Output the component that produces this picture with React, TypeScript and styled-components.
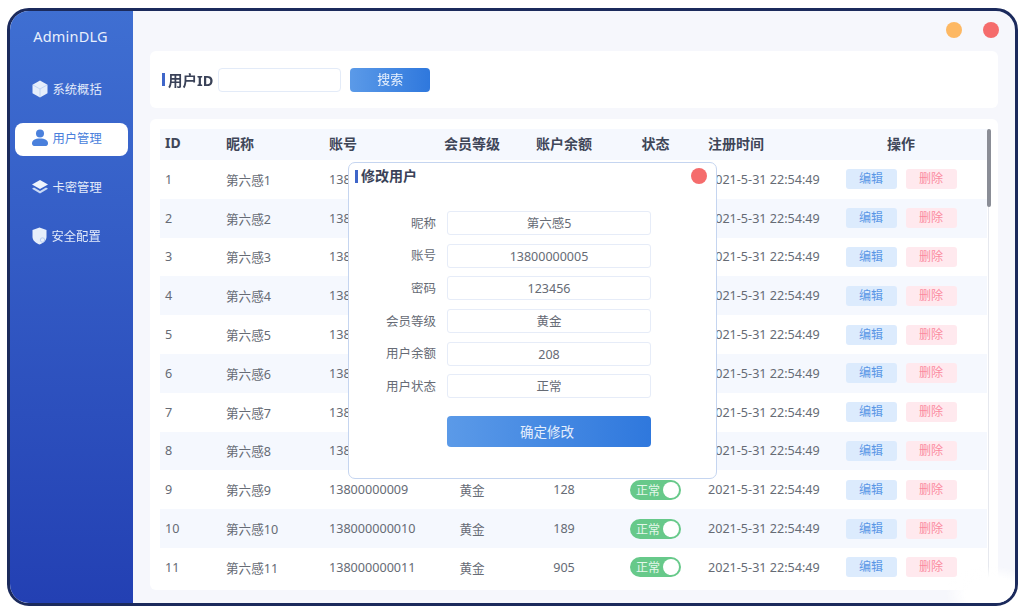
import React from "react";
import styled, { createGlobalStyle } from "styled-components";

const Global = createGlobalStyle`
  html, body { margin: 0; padding: 0; background: #fff; }
  body { font-family: "Noto Sans", "Noto Sans CJK SC", sans-serif; width: 1024px; height: 614px; overflow: hidden; }
  * { box-sizing: border-box; }
`;
const Stage = styled.div`
  padding: 8px 6px 8px 7px;
  height: 614px;
  filter: blur(0.55px);
`;
const Frame = styled.div`
  position: relative;
  height: 598px;
  border: 3px solid #1b2a5c;
  border-radius: 22px;
  overflow: hidden;
  display: flex;
  background: #f6f7fc;
`;
const Side = styled.aside`
  width: 123px;
  flex: none;
  background: linear-gradient(180deg, #3f6fd2 0%, #2340b3 100%);
  display: flex;
  flex-direction: column;
  align-items: center;
  padding-top: 13px;
`;
const Logo = styled.div`
  color: #e8effc;
  font-size: 14.5px;
  line-height: 24px;
  letter-spacing: 0.2px;
  margin-bottom: 26px;
  margin-left: -2px;
`;
const Nav = styled.nav`
  display: flex;
  flex-direction: column;
  gap: 16px;
  width: 113px;
  margin-left: -1px;
`;
const NavItem = styled.div<{ $active?: boolean }>`
  height: 33px;
  border-radius: 8px;
  display: flex;
  align-items: center;
  gap: 5px;
  padding: 0 0 3px 17px;
  font-size: 12.3px;
  background: ${(p) => (p.$active ? "#fff" : "transparent")};
  color: ${(p) => (p.$active ? "#4a7fdc" : "#e3ebfa")};
`;
const Main = styled.main`
  flex: 1;
  min-width: 0;
  display: flex;
  flex-direction: column;
  padding-left: 17px;
  padding-right: 17px;
`;
const TopBar = styled.div`
  height: 40px;
  flex: none;
  display: flex;
  justify-content: flex-end;
  align-items: flex-start;
  gap: 21px;
  padding: 11px 0 0;
  margin-right: -1px;
`;
const Dot = styled.span<{ $color: string }>`
  width: 16px;
  height: 16px;
  border-radius: 50%;
  background: ${(p) => p.$color};
  flex: none;
`;
const SearchCard = styled.section`
  height: 57px;
  flex: none;
  background: #fff;
  border-radius: 6px;
  display: flex;
  align-items: center;
  padding: 0 12px;
  margin-bottom: 11px;
`;
const Heading = styled.div`
  display: flex;
  align-items: center;
  gap: 3px;
  font-weight: 700;
  color: #3a4258;
  font-size: 14px;
  line-height: 16px;
  &::before {
    content: "";
    width: 3px;
    height: 13px;
    background: #3f66c9;
  }
`;
const SearchHeading = styled(Heading)`
  font-size: 14.5px;
`;
const SearchInput = styled.div`
  width: 123px;
  height: 24px;
  margin-left: 5px;
  border: 1px solid #e3ebf8;
  border-radius: 4px;
  background: #fff;
`;
const SearchButton = styled.button`
  width: 80px;
  height: 24px;
  margin-left: 9px;
  border: 0;
  border-radius: 4px;
  background: linear-gradient(90deg, #5b9ae8, #2f78dd);
  color: #e8f1fd;
  font: inherit;
  font-size: 13px;
  padding: 0 0 2px;
`;
const TableCard = styled.section`
  height: 471px;
  flex: none;
  background: #fff;
  border-radius: 6px;
  display: flex;
  padding: 10px 7px 0 10px;
  overflow: hidden;
`;
const Table = styled.div`
  flex: 1;
  min-width: 0;
`;
const Scroll = styled.div`
  width: 4px;
  flex: none;
  position: relative;
  height: 100%;
  background: linear-gradient(90deg, transparent 1px, #e6e8ee 1px, #e6e8ee 2px, transparent 2px);
  &::before {
    content: "";
    position: absolute;
    left: 0;
    top: 0;
    width: 4px;
    height: 78px;
    border-radius: 2px;
    background: #8a8d96;
  }
`;
const cols = "61px 103px 100px 96px 88px 95px 135px 126px";
const HeadRow = styled.div`
  display: grid;
  grid-template-columns: ${cols};
  height: 31px;
  padding-bottom: 4px;
  align-items: center;
  background: #f5f8fe;
  font-size: 14px;
  font-weight: 700;
  color: #3f4658;
`;
const Row = styled.div<{ $alt: boolean }>`
  display: grid;
  grid-template-columns: ${cols};
  height: 38.8px;
  align-items: center;
  background: ${(p) => (p.$alt ? "#f5f8fe" : "#fff")};
  font-size: 12.6px;
  color: #666b75;
`;
const Cell = styled.div<{ $center?: boolean }>`
  padding-left: ${(p) => (p.$center ? 0 : 5)}px;
  text-align: ${(p) => (p.$center ? "center" : "left")};
  white-space: nowrap;
`;
const Switch = styled.div`
  width: 51px;
  height: 20px;
  margin: 0 auto;
  border-radius: 10px;
  background: #67c98a;
  color: #e4f7ea;
  font-size: 12px;
  display: flex;
  align-items: center;
  justify-content: space-between;
  padding: 0 2px 0 6px;
  &::after {
    content: "";
    width: 16px;
    height: 16px;
    border-radius: 50%;
    background: #fff;
  }
`;
const Ops = styled.div`
  display: flex;
  justify-content: center;
  gap: 9px;
`;
const Op = styled.span<{ $danger?: boolean }>`
  width: 51px;
  height: 20px;
  border-radius: 3px;
  font-size: 12px;
  line-height: 19px;
  text-align: center;
  background: ${(p) => (p.$danger ? "#ffe9ee" : "#dcebfd")};
  color: ${(p) => (p.$danger ? "#fb8ba0" : "#5a97e6")};
`;
const Modal = styled.div`
  position: absolute;
  left: 338px;
  top: 151px;
  width: 369px;
  height: 317px;
  background: #fff;
  border: 1.5px solid #c5d5f0;
  border-radius: 7px;
  padding: 5px 9px 0 6px;
`;
const ModalHead = styled.div`
  display: flex;
  align-items: center;
  justify-content: space-between;
  height: 16px;
  margin-bottom: 27px;
`;
const Form = styled.div`
  display: flex;
  flex-direction: column;
  gap: 8.7px;
`;
const FormRow = styled.div`
  display: flex;
  align-items: center;
  height: 24px;
  font-size: 12.5px;
  color: #666b75;
`;
const Label = styled.div`
  width: 81px;
  text-align: right;
  margin-right: 11px;
  transform: translateY(-1px);
`;
const Value = styled.div`
  width: 204px;
  height: 24px;
  border: 1px solid #e6ecf8;
  border-radius: 3px;
  text-align: center;
  line-height: 23px;
`;
const Confirm = styled.button`
  display: block;
  width: 204px;
  height: 31px;
  margin: 18px 0 0 92px;
  border: 0;
  border-radius: 4px;
  background: linear-gradient(90deg, #5b9ae8, #2f78dd);
  color: #e4eefc;
  font: inherit;
  font-size: 13.5px;
  padding: 0 4px 2px 0;
`;
const Smudge = styled.div`
  position: absolute;
  right: -8px;
  bottom: -8px;
  width: 76px;
  height: 44px;
  background: radial-gradient(ellipse at 60% 60%, #fff 42%, rgba(255,255,255,0) 74%);
`;

const Cube = () => (
  <svg width="16" height="18" viewBox="0 0 16 18">
    <path d="M8 .5 15.500 4.700v8.600L8 17.500.5 13.300V4.700z" fill="#e6eefb" />
    <path d="M8 9v8M8 9 1 5M8 9l7-4" stroke="#b8cdf2" strokeWidth=".8" fill="none" />
  </svg>
);
const User = () => (
  <svg width="16" height="18" viewBox="0 0 16 18" fill="#4a80dc">
    <circle cx="8" cy="4.500" r="4" />
    <path d="M0 14.500C0 11 3 9.500 8 9.500s8 1.500 8 5c0 2-1.500 2.500-3 2.500H3c-1.500 0-3-.5-3-2.500z" />
  </svg>
);
const Layers = () => (
  <svg width="16" height="16" viewBox="0 0 16 16">
    <path d="M8 1 16 5.500 8 10 0 5.500z" fill="#f0f5fd" />
    <path d="M2 8.500 8 12l6-3.500 2 1.300L8 14.500 0 9.800z" fill="#c9d9f5" />
  </svg>
);
const Shield = () => (
  <svg width="15" height="18" viewBox="0 0 15 18">
    <path d="M7.500.5 14.500 3v7c0 3.800-3.500 6-7 7.500-3.500-1.500-7-3.700-7-7.500V3z" fill="#e6eefb" />
    <circle cx="10.500" cy="13" r="2.200" fill="none" stroke="#b8cdf2" strokeWidth="1" />
  </svg>
);

const data = [
  ["1", "第六感1", "13800000001", "黄金", "208"],
  ["2", "第六感2", "13800000002", "黄金", "315"],
  ["3", "第六感3", "13800000003", "黄金", "120"],
  ["4", "第六感4", "13800000004", "黄金", "466"],
  ["5", "第六感5", "13800000005", "黄金", "208"],
  ["6", "第六感6", "13800000006", "黄金", "350"],
  ["7", "第六感7", "13800000007", "黄金", "272"],
  ["8", "第六感8", "13800000008", "黄金", "541"],
  ["9", "第六感9", "13800000009", "黄金", "128"],
  ["10", "第六感10", "138000000010", "黄金", "189"],
  ["11", "第六感11", "138000000011", "黄金", "905"],
];
const form = [
  ["昵称", "第六感5"],
  ["账号", "13800000005"],
  ["密码", "123456"],
  ["会员等级", "黄金"],
  ["用户余额", "208"],
  ["用户状态", "正常"],
];

export default function App() {
  return (
    <Stage>
      <Global />
      <Frame>
        <Side>
          <Logo>AdminDLG</Logo>
          <Nav>
            <NavItem><Cube />系统概括</NavItem>
            <NavItem $active><User />用户管理</NavItem>
            <NavItem><Layers />卡密管理</NavItem>
            <NavItem><Shield />安全配置</NavItem>
          </Nav>
        </Side>
        <Main>
          <TopBar>
            <Dot $color="#fdb863" />
            <Dot $color="#f56c6c" />
          </TopBar>
          <SearchCard>
            <SearchHeading>用户ID</SearchHeading>
            <SearchInput />
            <SearchButton>搜索</SearchButton>
          </SearchCard>
          <TableCard>
            <Table>
              <HeadRow>
                <Cell>ID</Cell>
                <Cell>昵称</Cell>
                <Cell>账号</Cell>
                <Cell $center>会员等级</Cell>
                <Cell $center>账户余额</Cell>
                <Cell $center>状态</Cell>
                <Cell>注册时间</Cell>
                <Cell $center>操作</Cell>
              </HeadRow>
              {data.map((d, i) => (
                <Row key={d[0]} $alt={i % 2 === 1}>
                  <Cell>{d[0]}</Cell>
                  <Cell>{d[1]}</Cell>
                  <Cell>{d[2]}</Cell>
                  <Cell $center>{d[3]}</Cell>
                  <Cell $center>{d[4]}</Cell>
                  <Cell $center><Switch>正常</Switch></Cell>
                  <Cell>2021-5-31 22:54:49</Cell>
                  <Ops>
                    <Op>编辑</Op>
                    <Op $danger>删除</Op>
                  </Ops>
                </Row>
              ))}
            </Table>
            <Scroll />
          </TableCard>
        </Main>
        <Modal>
          <ModalHead>
            <Heading>修改用户</Heading>
            <Dot $color="#f56c6c" />
          </ModalHead>
          <Form>
            {form.map(([k, v]) => (
              <FormRow key={k}>
                <Label>{k}</Label>
                <Value>{v}</Value>
              </FormRow>
            ))}
          </Form>
          <Confirm>确定修改</Confirm>
        </Modal>
        <Smudge />
      </Frame>
    </Stage>
  );
}
